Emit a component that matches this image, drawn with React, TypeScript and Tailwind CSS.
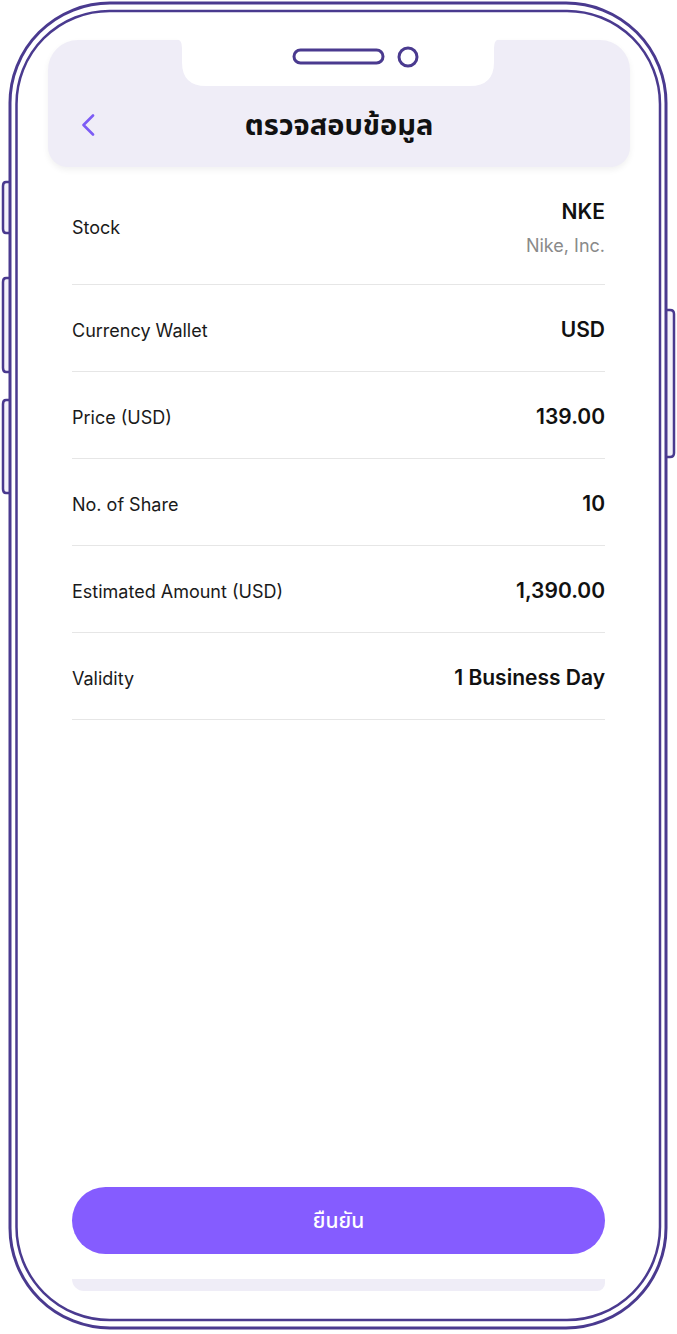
import React from 'react';

const rows = [
  { label: 'Currency Wallet', value: 'USD' },
  { label: 'Price (USD)', value: '139.00' },
  { label: 'No. of Share', value: '10' },
  { label: 'Estimated Amount (USD)', value: '1,390.00' },
  { label: 'Validity', value: '1 Business Day' },
];

const PhoneFrame = () => (
  <svg className="absolute inset-0 pointer-events-none" width="677" height="1334" viewBox="0 0 677 1334" fill="none">
    {/* notch */}
    <path d="M176 38 Q182 40 182 48 L182 62 Q182 86 206 86 L470 86 Q494 86 494 62 L494 48 Q494 40 500 38 Z" fill="#ffffff" />
    <rect x="294" y="50" width="89" height="13" rx="6.5" stroke="#4a3a8f" strokeWidth="3" />
    <circle cx="408" cy="57" r="9" stroke="#4a3a8f" strokeWidth="3" />
    {/* side buttons */}
    <path d="M10 182 L6 182 Q3 182 3 186 L3 229 Q3 233 6 233 L10 233" stroke="#4a3a8f" strokeWidth="2.5" fill="#f4f2fa" />
    <path d="M10 278 L6 278 Q3 278 3 282 L3 368 Q3 372 6 372 L10 372" stroke="#4a3a8f" strokeWidth="2.5" fill="#f4f2fa" />
    <path d="M10 400 L6 400 Q3 400 3 404 L3 489 Q3 493 6 493 L10 493" stroke="#4a3a8f" strokeWidth="2.5" fill="#f4f2fa" />
    <path d="M666 310 L670 310 Q674 310 674 314 L674 453 Q674 457 670 457 L666 457" stroke="#4a3a8f" strokeWidth="2.5" fill="#f4f2fa" />
    {/* body outlines */}
    <rect x="10" y="3" width="656" height="1325" rx="100" stroke="#4a3a8f" strokeWidth="3" />
    <rect x="16.5" y="11" width="643.5" height="1309" rx="93" stroke="#4a3a8f" strokeWidth="2.5" />
  </svg>
);

const App = () => {
  return (
    <div className="relative w-[677px] h-[1334px] bg-white overflow-hidden" style={{ fontFamily: 'Inter, "Noto Sans Thai", "Noto Sans", sans-serif' }}>
      <div className="flex flex-col h-full pt-[40px] pb-[43px]">
        {/* Header */}
        <div className="mx-[48px] w-[582px] h-[127px] bg-[#efedf7] rounded-t-[30px] rounded-b-[20px] shadow-[0_3px_6px_rgba(0,0,0,0.06)] pt-[43px] pl-[33px] pr-[47px] flex items-center">
          <svg width="14" height="22" viewBox="0 0 14 22" fill="none" className="shrink-0">
            <path d="M12 1.5 L2.5 11 L12 20.5" stroke="#7c5cf5" strokeWidth="2.6" strokeLinecap="round" strokeLinejoin="round" />
          </svg>
          <h1 className="flex-1 text-center text-[29px] font-bold text-[#111]">ตรวจสอบข้อมูล</h1>
        </div>

        {/* Details */}
        <div className="mx-[72px] flex flex-col">
          <div className="h-[118px] flex items-center justify-between border-b border-[#e6e6e6] pt-[4px]">
            <span className="text-[18px] text-[#1a1a1a]">Stock</span>
            <div className="flex flex-col items-end gap-[5px]">
              <span className="text-[21px] font-semibold text-[#111]">NKE</span>
              <span className="text-[18px] text-[#8a8a8a]">Nike, Inc.</span>
            </div>
          </div>
          {rows.map((row) => (
            <div key={row.label} className="h-[87px] flex items-center justify-between border-b border-[#e6e6e6] pt-[4px]">
              <span className="text-[18px] text-[#1a1a1a]">{row.label}</span>
              <span className="text-[21px] font-semibold text-[#111]">{row.value}</span>
            </div>
          ))}
        </div>

        {/* Confirm */}
        <button className="mt-auto mx-[72px] h-[67px] rounded-full bg-[#855cff] text-white text-[21px] font-medium">
          ยืนยัน
        </button>
        <div className="mt-[25px] mx-[72px] h-[12px] bg-[#efedf7] rounded-bl-[30px] rounded-br-[20px]" />
      </div>
      <PhoneFrame />
    </div>
  );
};

export default App;
